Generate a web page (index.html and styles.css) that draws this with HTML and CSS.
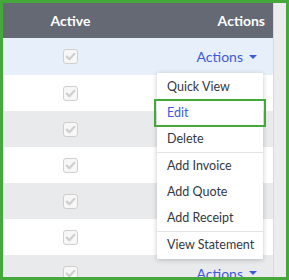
FILE: index.html
```html
<!DOCTYPE html>
<html>
<head>
<meta charset="utf-8">
<link rel="stylesheet" href="styles.css">
</head>
<body>
<div class="frame">
  <div class="table">
    <div class="row head">
      <div class="cell c-active">Active</div>
      <div class="cell c-actions">Actions</div>
    </div>
    <div class="row sel first">
      <div class="cell c-active"><span class="cb"><svg viewBox="0 0 15 15" width="15" height="15"><path d="M3.8 7.6 L6.4 10.2 L11.4 4.8" fill="none" stroke="#cfcfcf" stroke-width="2.2" stroke-linecap="round" stroke-linejoin="round"/></svg></span></div>
      <div class="cell c-actions"><span class="act">Actions <span class="caret"></span></span></div>
    </div>
    <div class="row">
      <div class="cell c-active"><span class="cb"><svg viewBox="0 0 15 15" width="15" height="15"><path d="M3.8 7.6 L6.4 10.2 L11.4 4.8" fill="none" stroke="#cfcfcf" stroke-width="2.2" stroke-linecap="round" stroke-linejoin="round"/></svg></span></div>
      <div class="cell c-actions"></div>
    </div>
    <div class="row alt">
      <div class="cell c-active"><span class="cb"><svg viewBox="0 0 15 15" width="15" height="15"><path d="M3.8 7.6 L6.4 10.2 L11.4 4.8" fill="none" stroke="#cfcfcf" stroke-width="2.2" stroke-linecap="round" stroke-linejoin="round"/></svg></span></div>
      <div class="cell c-actions"></div>
    </div>
    <div class="row">
      <div class="cell c-active"><span class="cb"><svg viewBox="0 0 15 15" width="15" height="15"><path d="M3.8 7.6 L6.4 10.2 L11.4 4.8" fill="none" stroke="#cfcfcf" stroke-width="2.2" stroke-linecap="round" stroke-linejoin="round"/></svg></span></div>
      <div class="cell c-actions"></div>
    </div>
    <div class="row alt">
      <div class="cell c-active"><span class="cb"><svg viewBox="0 0 15 15" width="15" height="15"><path d="M3.8 7.6 L6.4 10.2 L11.4 4.8" fill="none" stroke="#cfcfcf" stroke-width="2.2" stroke-linecap="round" stroke-linejoin="round"/></svg></span></div>
      <div class="cell c-actions"></div>
    </div>
    <div class="row">
      <div class="cell c-active"><span class="cb"><svg viewBox="0 0 15 15" width="15" height="15"><path d="M3.8 7.6 L6.4 10.2 L11.4 4.8" fill="none" stroke="#cfcfcf" stroke-width="2.2" stroke-linecap="round" stroke-linejoin="round"/></svg></span></div>
      <div class="cell c-actions"></div>
    </div>
    <div class="row alt">
      <div class="cell c-active"><span class="cb"><svg viewBox="0 0 15 15" width="15" height="15"><path d="M3.8 7.6 L6.4 10.2 L11.4 4.8" fill="none" stroke="#cfcfcf" stroke-width="2.2" stroke-linecap="round" stroke-linejoin="round"/></svg></span></div>
      <div class="cell c-actions"><span class="act">Actions <span class="caret"></span></span></div>
    </div>

    <ul class="menu">
      <li>Quick View</li>
      <li class="hl">Edit</li>
      <li>Delete</li>
      <li class="div"></li>
      <li>Add Invoice</li>
      <li>Add Quote</li>
      <li>Add Receipt</li>
      <li class="div"></li>
      <li>View Statement</li>
    </ul>
  </div>
  <div class="scroll"></div>
</div>
</body>
</html>
```
FILE: styles.css
```css
html, body {
  margin: 0;
  padding: 0;
  background: #fff;
}
body {
  font-family: Lato, "Open Sans", sans-serif;
}
.frame {
  width: 283px;
  height: 274px;
  border: 3px solid #44a83b;
  display: flex;
  overflow: hidden;
}
.table {
  position: relative;
  width: 270px;
  flex: none;
  background: #fff;
}
.scroll {
  flex: 1;
  background: #ececee;
  border-left: 1px solid #d9d9dc;
}
.row {
  display: grid;
  grid-template-columns: 135px 135px;
  height: 36px;
}
.row.head {
  height: 35px;
  background: #646974;
  color: #fff;
  font-weight: 700;
  font-size: 14px;
}
.row.first { height: 37px; }
.row.sel { background: #e7f0fa; }
.row.alt { background: #e9eaec; }
.cell {
  display: flex;
  align-items: center;
}
.c-active { justify-content: center; }
.c-actions {
  justify-content: flex-end;
  padding-right: 8px;
}
.row:not(.head) .c-actions { padding-right: 16px; }
.cb {
  width: 13px;
  height: 13px;
  border: 1px solid #cfcfcf;
  border-radius: 3px;
  background: #f7f7f7;
  display: flex;
  align-items: center;
  justify-content: center;
  overflow: hidden;
}
.cb svg { flex: none; }
.act {
  color: #3c5bd8;
  font-size: 14px;
  display: inline-flex;
  align-items: center;
}
.caret {
  display: inline-block;
  width: 0;
  height: 0;
  margin-left: 6px;
  border-left: 4px solid transparent;
  border-right: 4px solid transparent;
  border-top: 4px solid #3c5bd8;
}
.menu {
  position: absolute;
  left: 154px;
  top: 70px;
  width: 106px;
  margin: 0;
  padding: 1px 0;
  list-style: none;
  background: #fff;
  box-shadow: 0 1px 5px rgba(0,0,0,0.22);
  font-size: 12.5px;
  color: #333843;
}
.menu li {
  height: 26px;
  line-height: 26px;
  padding-left: 10px;
  white-space: nowrap;
}
.menu li.div {
  height: 0;
  border-top: 1px solid #e3e3e3;
  padding: 0;
}
.menu li.hl {
  color: #3c5bd8;
  outline: 2px solid #44a83b;
  outline-offset: -1px;
  margin: 0 -2px;
  padding-left: 12px;
}
```
